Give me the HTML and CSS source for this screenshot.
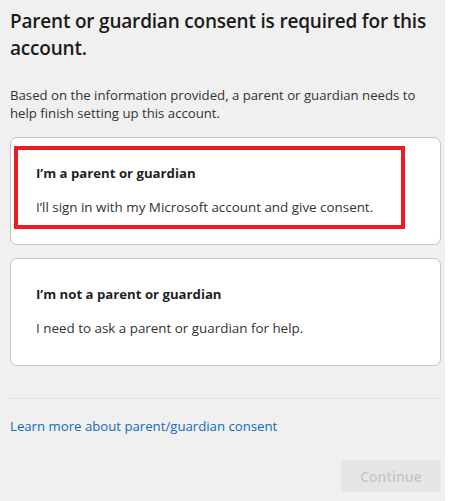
FILE: index.html
```html
<!DOCTYPE html>
<html lang="en">
<head>
<meta charset="utf-8">
<title>Parent or guardian consent</title>
<link rel="stylesheet" href="styles.css">
</head>
<body>
<main class="page">
  <h1 class="title">Parent or guardian consent is required for this account.</h1>
  <p class="lead">Based on the information provided, a parent or guardian needs to help finish setting up this account.</p>
  <div class="options">
    <div class="card" role="button" tabindex="0">
      <div class="highlight">
        <span class="card-title">I’m a parent or guardian</span>
        <span class="card-text">I’ll sign in with my Microsoft account and give consent.</span>
      </div>
    </div>
    <div class="card" role="button" tabindex="0">
      <div class="plain">
        <span class="card-title">I’m not a parent or guardian</span>
        <span class="card-text">I need to ask a parent or guardian for help.</span>
      </div>
    </div>
  </div>
  <hr class="divider">
  <a class="link" href="#">Learn more about parent/guardian consent</a>
  <div class="footer">
    <button class="continue" disabled>Continue</button>
  </div>
</main>
</body>
</html>
```

FILE: styles.css
```css
html, body {
  margin: 0;
  padding: 0;
  background: #ffffff;
  height: 100%;
}
.page {
  width: 445px;
  height: 501px;
  box-sizing: border-box;
  background: #f0f0f0;
  padding: 8px 4px 0 10px;
  font-family: "Open Sans", "Noto Sans", sans-serif;
  color: #1f1f1f;
  display: flex;
  flex-direction: column;
}
.title {
  margin: 0;
  font-size: 19px;
  font-weight: 600;
  line-height: 27px;
  letter-spacing: -0.2px;
  color: #1b1b1b;
}
.lead {
  margin: 24px 0 0 0;
  max-width: 422px;
  font-size: 13.2px;
  line-height: 18px;
  color: #333333;
}
.options {
  display: flex;
  flex-direction: column;
  gap: 13px;
  margin-top: 15px;
}
.card {
  height: 108px;
  box-sizing: border-box;
  background: #ffffff;
  border: 1px solid #c4c4c4;
  border-radius: 7px;
  padding: 8px 0 0 3px;
  cursor: pointer;
}
.highlight, .plain {
  display: flex;
  flex-direction: column;
  box-sizing: border-box;
  width: 391px;
  height: 83px;
  padding: 14px 0 0 18px;
  gap: 16px;
}
.highlight {
  border: 4px solid #ec1c24;
}
.plain {
  border: 4px solid transparent;
}
.card-title {
  font-size: 13.2px;
  font-weight: 700;
  line-height: 18px;
  color: #1f1f1f;
}
.card-text {
  font-size: 13.4px;
  line-height: 18px;
  color: #333333;
}
.divider {
  margin: 32px 0 0 -1px;
  border: 0;
  border-top: 1px solid #e2e2e2;
  height: 0;
}
.link {
  margin-top: 18px;
  font-size: 13.2px;
  line-height: 18px;
  color: #0f6cbd;
  text-decoration: none;
  align-self: flex-start;
}
.footer {
  display: flex;
  justify-content: flex-end;
  margin-top: 25px;
}
.continue {
  width: 100px;
  height: 32px;
  border: 0;
  border-radius: 4px;
  background: #e6e6e6;
  color: #c6c6c6;
  font-family: inherit;
  font-size: 14px;
  font-weight: 600;
}
```
